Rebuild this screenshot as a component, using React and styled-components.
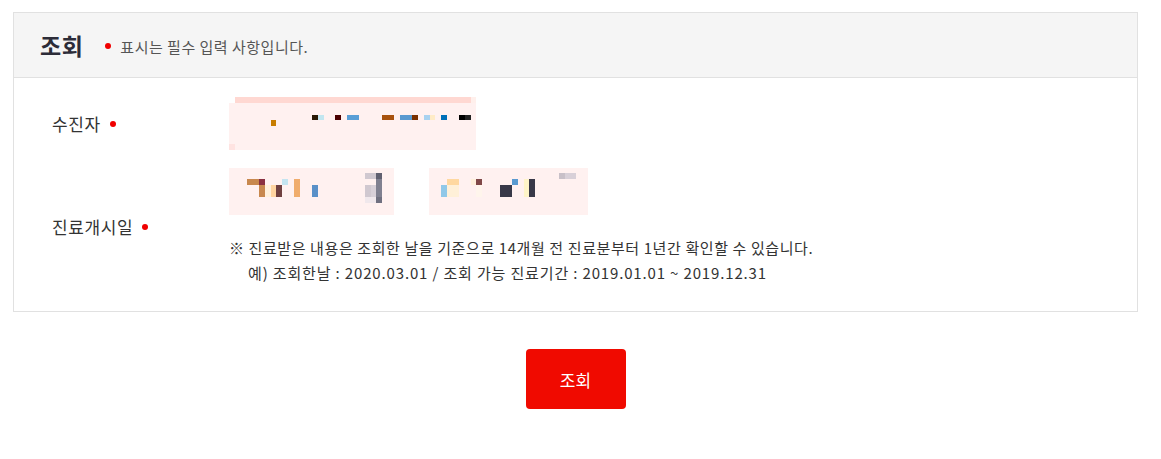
import React from 'react'
import styled, { createGlobalStyle } from 'styled-components'

const fieldA = {
    w: 247, h: 53,
    cells: [
        [6, 0, 236, 6, '#ffd8d2'], [242, 0, 5, 6, '#fff0ec'], [0, 47, 6, 6, '#ffe3e1'],
        [42, 23, 5, 6, '#c87d00'],
        [83, 18, 6, 5, '#2a1a05'], [89, 18, 6, 5, '#c2e6f0'], [106, 18, 6, 5, '#4a0000'],
        [118, 18, 12, 5, '#5a9ed6'], [153, 18, 12, 5, '#a8520e'], [171, 18, 12, 5, '#5a9ad0'],
        [183, 18, 6, 5, '#7a3000'], [195, 18, 6, 5, '#a8d2f0'], [201, 18, 5, 5, '#ffebc6'],
        [212, 18, 6, 5, '#0070b8'], [230, 18, 6, 5, '#000'], [236, 18, 6, 5, '#222'],
    ],
}

const fieldB = {
    w: 165, h: 47,
    cells: [
        [18, 11, 12, 6, '#c8884e'], [30, 11, 6, 6, '#8a3040'], [30, 17, 6, 12, '#c8884e'],
        [36, 17, 6, 12, '#fff0dc'], [42, 17, 5, 12, '#ffd4a0'], [47, 17, 6, 12, '#704040'],
        [53, 11, 6, 6, '#c4e4f0'], [65, 11, 6, 18, '#f0ac6c'], [83, 17, 6, 12, '#5a90c8'],
        [136, 5, 11, 6, '#d0c8d0'], [147, 5, 6, 6, '#606070'], [136, 17, 6, 12, '#d0c8d0'],
        [142, 17, 5, 12, '#d8d0d8'], [147, 11, 6, 18, '#808090'], [136, 29, 11, 6, '#f0e8ec'],
        [147, 29, 6, 6, '#707080'],
    ],
}

const fieldC = {
    w: 159, h: 47,
    cells: [
        [18, 11, 12, 6, '#ffd8a0'], [12, 17, 6, 12, '#90c8e8'], [18, 17, 12, 12, '#fff0d8'],
        [42, 11, 5, 6, '#fff0dc'], [47, 17, 6, 12, '#fff5ec'], [47, 11, 6, 6, '#804848'],
        [71, 17, 12, 12, '#383848'], [83, 11, 6, 6, '#5a9ad0'], [95, 11, 5, 18, '#fff4c8'],
        [100, 11, 6, 18, '#383848'], [130, 5, 6, 6, '#c8c0c8'], [136, 5, 11, 6, '#d8d0d8'],
    ],
}

function Masked({ field, top = 0 }) {
    // 모자이크 처리된 입력값
    return (
        <MaskedField $w={field.w} $h={field.h}>
            <svg width={field.w} height={field.h} viewBox={`0 0 ${field.w} ${field.h}`}>
                <rect x="0" y={top} width={field.w} height={field.h - top} fill="#fff1f0" />
                {field.cells.map((c, i) => (
                    <rect key={i} x={c[0]} y={c[1]} width={c[2]} height={c[3]} fill={c[4]} />
                ))}
            </svg>
        </MaskedField>
    )
}

function App() {
    return (
        <>
            <GlobalStyle />
            <Page>
                <Panel>
                    <Header>
                        <Title>조회</Title>
                        <Guide><Dot />표시는 필수 입력 사항입니다.</Guide>
                    </Header>
                    <Body>
                        <Row>
                            <Label>수진자<Dot /></Label>
                            <Masked field={fieldA} top={6} />
                        </Row>
                        <Row>
                            <Label>진료개시일<Dot /></Label>
                            <div>
                                <Fields>
                                    <Masked field={fieldB} />
                                    <Masked field={fieldC} />
                                </Fields>
                                <Note>
                                    <NoteLine>※ 진료받은 내용은 조회한 날을 기준으로 14개월 전 진료분부터 1년간 확인할 수 있습니다.</NoteLine>
                                    <NoteLine $indent>예) 조회한날 : 2020.03.01 / 조회 가능 진료기간 : 2019.01.01 ~ 2019.12.31</NoteLine>
                                </Note>
                            </div>
                        </Row>
                    </Body>
                </Panel>
                <Actions>
                    <SearchButton>조회</SearchButton>
                </Actions>
            </Page>
        </>
    )
}

export default App


const GlobalStyle = createGlobalStyle`
    body {
        margin: 0;
        background: #fff;
        font-family: "Noto Sans CJK KR", "Noto Sans", sans-serif;
        color: #333;
    }
`

const Page = styled.div`
    padding: 12px 0 0 13px;
`

const Panel = styled.div`
    width: 1123px;
    border: 1px solid #e1e1e1;
`

const Header = styled.div`
    height: 64px;
    display: flex;
    align-items: center;
    padding-left: 26px;
    background: #f5f5f5;
    border-bottom: 1px solid #e1e1e1;
`

const Title = styled.h2`
    margin: 0 22px 0 0;
    font-size: 23px;
    font-weight: 700;
    color: #2c2c38;
    letter-spacing: 0.5px;
`

const Guide = styled.div`
    display: flex;
    align-items: center;
    font-size: 15px;
    color: #555;
    letter-spacing: 0.5px;
    padding-top: 2px;

    & > span {
        margin: 0 9px 0 0;
    }
`

const Dot = styled.span`
    display: inline-block;
    width: 6px;
    height: 6px;
    border-radius: 50%;
    background: #f00000;
    margin-left: 9px;
`

const Body = styled.div`
    padding: 19px 0 26px 38px;
    display: flex;
    flex-direction: column;
    gap: 18px;
`

const Row = styled.div`
    display: grid;
    grid-template-columns: 177px 1fr;
    align-items: center;
`

const Label = styled.div`
    display: flex;
    align-items: center;
    font-size: 17px;
    color: #333;
    letter-spacing: 0.6px;
`

const Fields = styled.div`
    display: flex;
    gap: 35px;
`

const MaskedField = styled.div`
    width: ${props => props.$w}px;
    height: ${props => props.$h}px;

    svg {
        display: block;
    }
`

const Note = styled.div`
    margin-top: 20px;
    font-size: 15px;
    color: #333;
`

const NoteLine = styled.p`
    margin: 0;
    line-height: 25px;
    letter-spacing: ${props => props.$indent ? '0.85px' : '0.6px'};
    padding-left: ${props => props.$indent ? '19px' : '0'};
`

const Actions = styled.div`
    width: 1125px;
    display: flex;
    justify-content: center;
    padding-top: 37px;
`

const SearchButton = styled.button`
    width: 100px;
    height: 60px;
    border: none;
    border-radius: 4px;
    background: #f00a00;
    color: #fff;
    font-family: inherit;
    font-size: 17px;
    cursor: pointer;
`
